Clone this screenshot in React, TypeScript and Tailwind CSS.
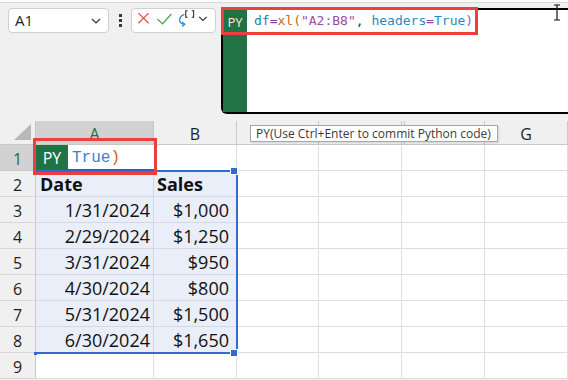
const cols = [
  { key: "A", w: "w-[118px]", label: "A" },
  { key: "B", w: "w-[83px]", label: "B" },
  { key: "C", w: "w-[82px]", label: "" },
  { key: "D", w: "w-[83px]", label: "" },
  { key: "F", w: "w-[83px]", label: "" },
  { key: "G", w: "w-[83px]", label: "G" },
];

const data = [
  ["1/31/2024", "$1,000"],
  ["2/29/2024", "$1,250"],
  ["3/31/2024", "$950"],
  ["4/30/2024", "$800"],
  ["5/31/2024", "$1,500"],
  ["6/30/2024", "$1,650"],
];

const Chevron = () => (
  <svg width="10" height="6" viewBox="0 0 10 6" className="shrink-0">
    <path d="M1 1 L5 5 L9 1" fill="none" stroke="#333" strokeWidth="1.2" />
  </svg>
);

const TopBar = () => (
  <div className="h-[121px] shrink-0">
    <div className="h-[3px] bg-[#fafafa] border-b border-[#d8d8d8]" />
    <div className="flex items-start pl-2 pt-[5px]">
      <div className="w-[101px] h-[25px] bg-white border border-[#d0d0d0] rounded-[4px] flex items-center justify-between pl-[6px] pr-[7px]">
        <span className="text-[15px] text-[#1f1f1f] leading-none">A1</span>
        <Chevron />
      </div>
      <div className="w-[22px] h-[25px] flex flex-col items-center justify-center gap-[2px] pl-[1px]">
        <div className="w-[3px] h-[3px] bg-[#3a3a3a]" />
        <div className="w-[3px] h-[3px] bg-[#3a3a3a]" />
        <div className="w-[3px] h-[3px] bg-[#3a3a3a]" />
      </div>
      <div className="w-[85px] h-[25px] bg-white border border-[#d0d0d0] rounded-[4px] flex items-center pl-[5px]">
        <svg width="84" height="23" viewBox="0 0 84 23">
          <path d="M1.5 3.5 L12.5 14.5 M12.5 3.5 L1.5 14.5" stroke="#e8474c" strokeWidth="1.3" fill="none" />
          <path d="M22 10 L27.5 15 L37 4.5" stroke="#4caa55" strokeWidth="1.4" fill="none" />
          <path d="M51 5 Q45.5 7 46 12 Q46.8 15.5 51 15.5" stroke="#2f86d6" strokeWidth="1.4" fill="none" />
          <path d="M48.5 13 L51.5 15.5 L48.5 18" stroke="#2f86d6" strokeWidth="1.3" fill="none" />
          <path d="M54.5 1 L52.5 1 L52.5 8 L54.5 8 M59 1 L61 1 L61 8 L59 8" stroke="#222" strokeWidth="1.1" fill="none" />
          <path d="M67 7.5 L71 11.5 L75 7.5" stroke="#333" strokeWidth="1.2" fill="none" />
        </svg>
      </div>
      <div className="ml-[5px] flex-1 h-[106px] bg-white border-2 border-r-0 border-black rounded-bl-[6px] flex">
        <div className="w-[24px] bg-[#217346] flex justify-center pt-[2px]">
          <span className="text-[13px] text-[#f4edd2] leading-[20px]">PY</span>
        </div>
        <div className="pl-[7px] pt-[1px] font-['DejaVu_Sans_Mono',monospace] text-[13px] leading-[20px] whitespace-pre">
          <span className="text-[#1a7fb8]">df</span>
          <span className="text-[#8e44ad]">=</span>
          <span className="text-[#c8641e]">xl(</span>
          <span className="text-[#9a4aa8]">"A2:B8"</span>
          <span className="text-[#333]">, </span>
          <span className="text-[#1f8bbf]">headers</span>
          <span className="text-[#8e44ad]">=</span>
          <span className="text-[#1f8bbf]">True</span>
          <span className="text-[#9b59b6]">)</span>
        </div>
      </div>
    </div>
  </div>
);

const HeaderRow = () => (
  <div className="flex h-[24px] bg-[#f0f0f0] border-b border-[#c8c8c8]">
    <div className="w-[36px] shrink-0 border-r border-[#c8c8c8] relative">
      <svg width="20" height="18" viewBox="0 0 20 18" className="absolute right-[3px] bottom-[3px]">
        <path d="M19 1 L19 17 L2 17 Z" fill="#b8b8b8" />
      </svg>
    </div>
    {cols.map((c) => (
      <div
        key={c.key}
        className={`${c.w} shrink-0 border-r border-[#c8c8c8] flex items-center justify-center pt-[2px] text-[16px] leading-none relative ${
          c.key === "A" ? "bg-[#d2d2d2] text-[#1e6b41]" : "text-[#1f1f1f]"
        }`}
      >
        {c.key === "F" && <div className="absolute left-[2px] top-0 bottom-0 border-l border-[#c8c8c8]" />}
        {c.label}
      </div>
    ))}
  </div>
);

const RowHead = ({ n, active }: { n: number; active?: boolean }) => (
  <div
    className={`w-[36px] shrink-0 border-r border-[#c8c8c8] border-b flex items-center justify-center pt-[3px] text-[16px] leading-none ${
      active ? "bg-[#d2d2d2] text-[#1e6b41] border-b-[#c8c8c8]" : "bg-[#f0f0f0] text-[#1f1f1f] border-b-[#d8d8d8]"
    }`}
  >
    {n}
  </div>
);

const Blank = ({ w }: { w: string }) => (
  <div className={`${w} shrink-0 border-r border-b border-[#dedede] bg-white`} />
);

const Grid = () => {
  const rest = cols.slice(2);
  return (
    <div className="relative flex-1 font-['Open_Sans',sans-serif]">
      <HeaderRow />
      {/* row 1 */}
      <div className="flex h-[26px]">
        <RowHead n={1} active />
        <div className="w-[118px] shrink-0 border-b-2 border-[#217346] flex bg-white">
          <div className="w-[32px] bg-[#217346] flex items-center justify-center pt-[2px]">
            <span className="text-[16px] text-white leading-none">PY</span>
          </div>
          <div className="pl-[4px] pt-[2px] flex items-center font-['Liberation_Mono',monospace] text-[16px] leading-none">
            <span className="text-[#3a7fd6]">True</span>
            <span className="text-[#c8641e]">)</span>
          </div>
        </div>
        <Blank w="w-[83px]" />
        {rest.map((c) => (
          <Blank key={c.key} w={c.w} />
        ))}
      </div>
      {/* row 2 */}
      <div className="flex h-[26px]">
        <RowHead n={2} />
        <div className="w-[118px] shrink-0 border-r border-b border-[#d3d9e4] bg-[#e9eef8] flex items-center pl-[4px] pt-[2px] text-[18px] font-bold text-[#111]">
          Date
        </div>
        <div className="w-[83px] shrink-0 border-r border-b border-[#d3d9e4] bg-[#e9eef8] flex items-center pl-[3px] pt-[2px] text-[18px] font-bold text-[#111]">
          Sales
        </div>
        {rest.map((c) => (
          <Blank key={c.key} w={c.w} />
        ))}
      </div>
      {data.map((r, i) => (
        <div key={r[0]} className="flex h-[26px]">
          <RowHead n={i + 3} />
          <div className="w-[118px] shrink-0 border-r border-b border-[#d3d9e4] bg-[#e9eef8] flex items-center justify-end pr-[3px] pt-[2px] text-[18px] text-[#111]">
            {r[0]}
          </div>
          <div className="w-[83px] shrink-0 border-r border-b border-[#d3d9e4] bg-[#e9eef8] flex items-center justify-end pr-[7px] pt-[2px] text-[18px] text-[#111]">
            {r[1]}
          </div>
          {rest.map((c) => (
            <Blank key={c.key} w={c.w} />
          ))}
        </div>
      ))}
      <div className="flex h-[26px]">
        <RowHead n={9} />
        <Blank w="w-[118px]" />
        <Blank w="w-[83px]" />
        {rest.map((c) => (
          <Blank key={c.key} w={c.w} />
        ))}
      </div>

      {/* range reference border */}
      <div className="absolute left-[36px] top-[49px] w-[202px] h-[184px] border-t-2 border-r-2 border-b-2 border-[#2f6bd0] pointer-events-none">
        <div className="absolute left-[194px] -top-[5px] w-[8px] h-[8px] bg-[#2f6bd0] border border-white" />
        <div className="absolute left-[194px] top-[177px] w-[8px] h-[8px] bg-[#2f6bd0] border border-white" />
        <div className="absolute -left-[2px] top-[180px] w-[3px] h-[3px] bg-[#2f6bd0]" />
      </div>

      {/* red annotation round the in-cell editor */}
      <div className="absolute left-[33px] top-[17px] w-[124px] h-[37px] border-[3px] border-[#ee3e3e]" />

      {/* tooltip */}
      <div className="absolute left-[250px] top-[4px] w-[248px] h-[17px] bg-white border border-[#a8a8a8] shadow-[1px_1px_2px_rgba(0,0,0,0.12)] flex items-center pl-[5px] text-[12px] font-medium text-[#3a3a3a] leading-none whitespace-nowrap">
        PY(Use Ctrl+Enter to commit Python code)
      </div>
    </div>
  );
};

export default function App() {
  return (
    <div className="w-[568px] h-[380px] overflow-hidden bg-[#f0f0f0] relative flex flex-col font-['Open_Sans',sans-serif]">
      <TopBar />
      <Grid />

      {/* red annotation round the formula line */}
      <div className="absolute left-[221px] top-[7px] w-[257px] h-[28px] border-[3px] border-[#ee3e3e]" />

      {/* text cursor */}
      <svg width="10" height="17" viewBox="0 0 10 17" className="absolute left-[552px] top-[4px]">
        <path d="M2 1 L8 1 M5 1 L5 16 M2 16 L8 16" stroke="#111" strokeWidth="1.2" fill="none" />
      </svg>
    </div>
  );
}
